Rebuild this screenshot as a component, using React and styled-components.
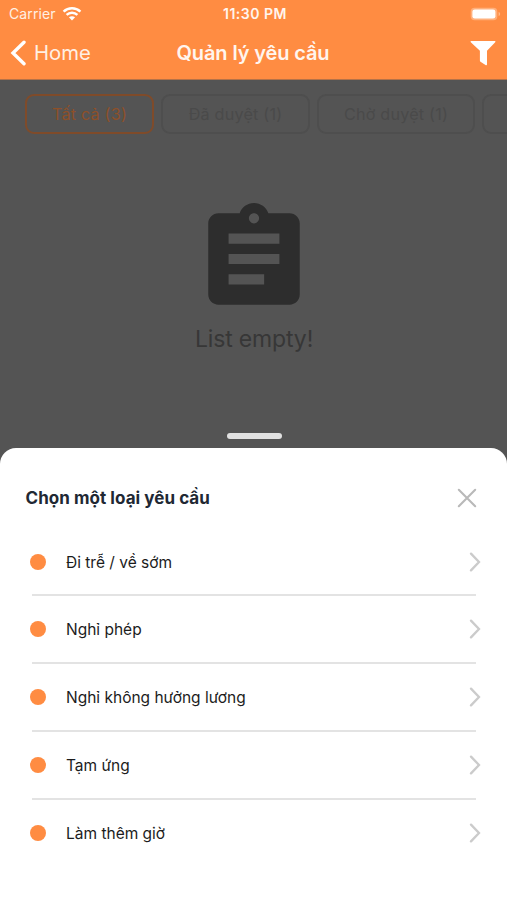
import React from 'react';
import styled, { createGlobalStyle } from 'styled-components';


const tabs = [
    { id: 'all', label: 'Tất cả (3)', width: 129, active: true },
    { id: 'approved', label: 'Đã duyệt (1)', width: 149 },
    { id: 'pending', label: 'Chờ duyệt (1)', width: 158 },
    { id: 'more', width: 140 },
];

const requestTypes = [
    'Đi trễ / về sớm',
    'Nghỉ phép',
    'Nghỉ không hưởng lương',
    'Tạm ứng',
    'Làm thêm giờ',
];


const WifiIcon = () => (
    <svg width="20" height="16" viewBox="0 0 20 16" fill="none" stroke="#fff" strokeWidth="2.5">
        <path d="M1.6 5.6C6.3 1.1 13.7 1.1 18.4 5.6" />
        <path d="M4.6 8.8C7.7 5.9 12.3 5.9 15.4 8.8" />
        <path d="M10 14.6L6.9 11.3C8.7 9.8 11.3 9.8 13.1 11.3Z" fill="#fff" stroke="none" />
    </svg>
);

const BatteryIcon = () => (
    <svg width="31" height="14" viewBox="0 0 31 14">
        <rect x="0.7" y="0.7" width="26.6" height="12.6" rx="4" fill="#ffb07c" />
        <rect x="2.4" y="2.4" width="23" height="9.2" rx="2.4" fill="#fff" />
        <path d="M28.6 5v4c1-.4 1.5-1.1 1.5-2s-.5-1.6-1.5-2z" fill="#ffb888" />
    </svg>
);

const BackIcon = () => (
    <svg width="16" height="26" viewBox="0 0 16 26" fill="none" stroke="#fff" strokeWidth="3.4">
        <path d="M14 2.2L3 13L14 23.8" strokeLinecap="round" />
    </svg>
);

const FilterIcon = () => (
    <svg width="26" height="26" viewBox="0 0 26 26" fill="#fff">
        <path d="M1.3 1h23.4c.7 0 1 .7.5 1.2L17 10.8v13.4c0 .9-.8 1.3-1.5.8l-5-3.3c-.4-.3-.6-.6-.6-1.1v-9.8L.8 2.2C.3 1.7.6 1 1.3 1z" />
    </svg>
);

const ClipboardIcon = () => (
    <svg width="122" height="122" viewBox="0 0 24 24" fill="#2d2d2d">
        <path d="M19 3h-4.18C14.4 1.84 13.3 1 12 1c-1.3 0-2.4.84-2.82 2H5c-1.1 0-2 .9-2 2v14c0 1.1.9 2 2 2h14c1.1 0 2-.9 2-2V5c0-1.1-.9-2-2-2zm-7 0c.55 0 1 .45 1 1s-.45 1-1 1-1-.45-1-1 .45-1 1-1zm2 14H7v-2h7v2zm3-4H7v-2h10v2zm0-4H7V7h10v2z" />
    </svg>
);

const CloseIcon = () => (
    <svg width="20" height="20" viewBox="0 0 20 20" fill="none" stroke="#b9b9b9" strokeWidth="2.1">
        <path d="M1.8 1.8L18.2 18.2M18.2 1.8L1.8 18.2" strokeLinecap="round" />
    </svg>
);

const ChevronIcon = () => (
    <svg width="12" height="20" viewBox="0 0 12 20" fill="none" stroke="#cbcbcb" strokeWidth="2.3">
        <path d="M2 1.6L10 10L2 18.4" strokeLinecap="round" />
    </svg>
);


const App = () => {

    return (
        <Screen>
            <GlobalStyle />
            <Header>
                <StatusBar>
                    <Carrier>Carrier <WifiIcon /></Carrier>
                    <Clock>11:30 PM</Clock>
                    <StatusRight><BatteryIcon /></StatusRight>
                </StatusBar>
                <NavBar>
                    <BackButton><BackIcon />Home</BackButton>
                    <Title>Quản lý yêu cầu</Title>
                    <FilterButton><FilterIcon /></FilterButton>
                </NavBar>
            </Header>
            <Content>
                <Tabs>
                    {tabs.map((tab) => (
                        <Tab key={tab.id} $active={tab.active} $width={tab.width}>{tab.label}</Tab>
                    ))}
                </Tabs>
                <Empty>
                    <ClipboardIcon />
                    <EmptyText>List empty!</EmptyText>
                </Empty>
                <Handle />
            </Content>
            <Sheet>
                <SheetHeader>
                    <SheetTitle>Chọn một loại yêu cầu</SheetTitle>
                    <CloseButton><CloseIcon /></CloseButton>
                </SheetHeader>
                <List>
                    {requestTypes.map((name) => (
                        <Row key={name}>
                            <Dot />
                            <RowLabel>{name}</RowLabel>
                            <ChevronIcon />
                        </Row>
                    ))}
                </List>
            </Sheet>
        </Screen>
    );
};

const GlobalStyle = createGlobalStyle`
    body {
        margin: 0;
        overflow: hidden;
    }

    * {
        box-sizing: border-box;
    }

    svg {
        display: block;
        flex-shrink: 0;
    }
`;

const Screen = styled.div`
    display: flex;
    flex-direction: column;
    width: 507px;
    height: 900px;
    overflow: hidden;
    background: #545454;
    font-family: Inter, 'Noto Sans', sans-serif;
`;

const Header = styled.header`
    flex: none;
    height: 80px;
    background: #ff8c42;
    border-bottom: 1px solid #b67247;
    color: #fff;
`;

const StatusBar = styled.div`
    display: grid;
    grid-template-columns: 1fr auto 1fr;
    align-items: center;
    height: 27px;
    padding: 0 6px 0 9px;
`;

const Carrier = styled.div`
    display: flex;
    align-items: center;
    gap: 6px;
    font-size: 14px;
    letter-spacing: 0.1px;
    color: #fff0e4;
`;

const Clock = styled.div`
    font-size: 14px;
    font-weight: 600;
    letter-spacing: 0.5px;
    color: #fff5ee;
`;

const StatusRight = styled.div`
    display: flex;
    justify-content: flex-end;
`;

const NavBar = styled.div`
    display: grid;
    grid-template-columns: 1fr auto 1fr;
    align-items: center;
    height: 52px;
    padding: 0 11px 0 10px;
`;

const BackButton = styled.button`
    display: flex;
    align-items: center;
    gap: 8px;
    padding: 0;
    border: none;
    background: none;
    color: #fff0e4;
    font-family: inherit;
    font-size: 20.3px;
    line-height: 24px;
`;

const Title = styled.h1`
    margin: 0;
    color: #fff5ee;
    font-size: 20px;
    font-weight: 600;
    letter-spacing: -0.12px;
    line-height: 28px;
`;

const FilterButton = styled.button`
    display: flex;
    justify-content: flex-end;
    padding: 0;
    border: none;
    background: none;
`;

const Content = styled.main`
    display: flex;
    flex: none;
    flex-direction: column;
    align-items: center;
    height: 368px;
    padding: 0 0 8px 1px;
`;

const Tabs = styled.div`
    display: flex;
    flex: none;
    gap: 7px;
    width: 100%;
    padding: 14px 0 0 24px;
    overflow: hidden;
`;

const Tab = styled.div`
    display: flex;
    flex: none;
    align-items: center;
    justify-content: center;
    width: ${({ $width }) => $width}px;
    height: 40px;
    border: ${({ $active }) => ($active ? '2px solid #7f4b2a' : '2px solid #4e4e4e')};
    border-radius: 9px;
    color: ${({ $active }) => ($active ? '#8e5029' : '#4a4a4a')};
    font-size: 16.2px;
    letter-spacing: 0.2px;
`;

const Empty = styled.div`
    display: flex;
    flex: 1;
    flex-direction: column;
    align-items: center;
    padding-top: 64px;
`;

const EmptyText = styled.p`
    margin: 4px 0 0;
    color: #373737;
    font-size: 23px;
    letter-spacing: -0.15px;
    line-height: 30px;
`;

const Handle = styled.div`
    width: 55px;
    height: 6px;
    margin-bottom: 1px;
    border-radius: 3px;
    background: #e1e1e1;
`;

const Sheet = styled.section`
    flex: 1;
    border-radius: 16px 16px 0 0;
    background: #fff;
`;

const SheetHeader = styled.div`
    display: flex;
    align-items: center;
    justify-content: space-between;
    height: 80.7px;
    padding: 20px 30px 0 25.5px;
`;

const SheetTitle = styled.h2`
    margin: 0;
    color: #212833;
    font-size: 17px;
    font-weight: 650;
    letter-spacing: 0.05px;
    line-height: 24px;
`;

const CloseButton = styled.button`
    padding: 0;
    border: none;
    background: none;
`;

const List = styled.ul`
    margin: 0;
    padding: 0 31px 0 32px;
    list-style: none;
`;

const Row = styled.li`
    display: flex;
    align-items: center;
    height: 67.75px;
    border-bottom: 2px solid #e3e3e3;

    svg {
        margin-right: -5px;
    }

    &:last-child {
        border-bottom-color: transparent;
    }
`;

const Dot = styled.span`
    width: 16px;
    height: 16px;
    margin-left: -2px;
    border-radius: 50%;
    background: #ff8c42;
`;

const RowLabel = styled.span`
    flex: 1;
    margin-left: 20px;
    padding-top: 2px;
    color: #1c1c1c;
    font-size: 15.5px;
    line-height: 24px;
`;


export default App;
